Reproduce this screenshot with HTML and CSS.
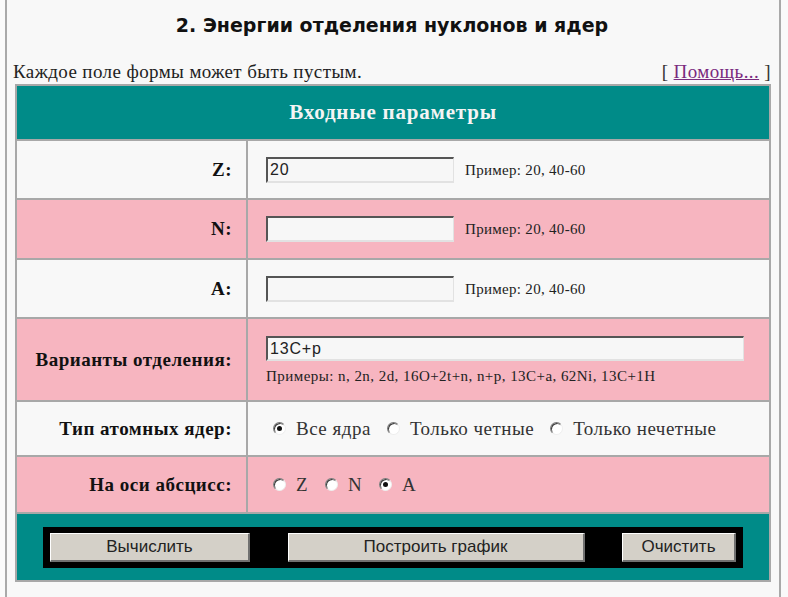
FILE: index.html
```html
<!DOCTYPE html>
<html lang="ru">
<head>
<meta charset="utf-8">
<title>Энергии отделения нуклонов и ядер</title>
<link rel="stylesheet" href="styles.css">
</head>
<body>
<div class="frame">
  <h1 class="title">2. Энергии отделения нуклонов и ядер</h1>
  <div class="note">
    <span>Каждое поле формы может быть пустым.</span>
    <span class="help">[ <a href="#" class="help-link">Помощь...</a> ]</span>
  </div>
  <table class="form-table">
    <tr class="row-head">
      <th colspan="2" class="head">Входные параметры</th>
    </tr>
    <tr class="row-light row-z">
      <td class="label">Z:</td>
      <td class="value"><input class="field" type="text" value="20"><span class="hint">Пример: 20, 40-60</span></td>
    </tr>
    <tr class="row-pink row-n">
      <td class="label">N:</td>
      <td class="value"><input class="field" type="text" value=""><span class="hint">Пример: 20, 40-60</span></td>
    </tr>
    <tr class="row-light row-a">
      <td class="label">A:</td>
      <td class="value"><input class="field" type="text" value=""><span class="hint">Пример: 20, 40-60</span></td>
    </tr>
    <tr class="row-pink row-var">
      <td class="label">Варианты отделения:</td>
      <td class="value">
        <input class="field field-wide" type="text" value="13C+p">
        <div class="hint hint-below">Примеры: n, 2n, 2d, 16O+2t+n, n+p, 13C+a, 62Ni, 13C+1H</div>
      </td>
    </tr>
    <tr class="row-light row-type">
      <td class="label">Тип атомных ядер:</td>
      <td class="value">
        <div class="radios">
          <label class="opt"><span class="radio checked"></span>Все ядра</label>
          <label class="opt"><span class="radio"></span>Только четные</label>
          <label class="opt"><span class="radio"></span>Только нечетные</label>
        </div>
      </td>
    </tr>
    <tr class="row-pink row-axis">
      <td class="label">На оси абсцисс:</td>
      <td class="value">
        <div class="radios radios-tight">
          <label class="opt"><span class="radio"></span>Z</label>
          <label class="opt"><span class="radio"></span>N</label>
          <label class="opt"><span class="radio checked"></span>A</label>
        </div>
      </td>
    </tr>
    <tr class="row-foot">
      <td colspan="2" class="foot">
        <div class="btnbar">
          <button class="btn btn-calc" type="button">Вычислить</button>
          <button class="btn btn-plot" type="button">Построить график</button>
          <button class="btn btn-clear" type="button">Очистить</button>
        </div>
      </td>
    </tr>
  </table>
</div>
</body>
</html>
```
FILE: styles.css
```css
html, body {
  margin: 0;
  padding: 0;
  background: #fafafa;
}
body {
  font-family: "Liberation Serif", "Times New Roman", serif;
  color: #111;
}
.frame {
  margin-left: 5px;
  width: 776px;
  min-height: 597px;
  box-sizing: border-box;
  border-left: 2px solid #a9a9a9;
  border-right: 2px solid #a9a9a9;
  background: #f8f8f8;
  padding: 0 8px 0 6px;
}
.title {
  margin: 0;
  padding-top: 12px;
  height: 59px;
  box-sizing: border-box;
  text-align: center;
  font-family: "DejaVu Sans", "Open Sans", sans-serif;
  font-weight: bold;
  font-size: 19px;
  line-height: 27px;
  color: #111;
}
.note {
  display: flex;
  justify-content: space-between;
  font-size: 19px;
  letter-spacing: 0.4px;
  line-height: 25px;
  height: 25px;
  color: #222;
}
.help { color: #333; }
.help-link { color: #7a2a7e; }
.form-table {
  margin-left: 2px;
  width: 756px;
  border-collapse: collapse;
  border: 2px solid #b4b4b4;
}
.form-table td, .form-table th {
  border: 2px solid #a8a8a8;
  padding: 0;
}
.head {
  background: #008b88;
  color: #f4f4f4;
  font-size: 21px;
  letter-spacing: 0.8px;
  font-weight: bold;
  height: 53px;
  text-align: center;
}
.row-light td { background: #f8f8f8; }
.row-pink td { background: #f7b5c0; }
.label {
  width: 215px;
  text-align: right;
  padding-right: 14px !important;
  font-weight: bold;
  font-size: 19px;
  letter-spacing: 0.5px;
}
.value {
  padding-left: 18px !important;
  font-size: 15px;
}
.row-z td { height: 57px; }
.row-n td { height: 58px; }
.row-a td { height: 57px; }
.row-var td { height: 81px; }
.row-type td { height: 53px; }
.row-axis td { height: 55px; }
.field {
  width: 188px;
  height: 26px;
  box-sizing: border-box;
  margin: 0 11px 0 0;
  padding: 0 2px;
  border-style: solid;
  border-width: 2px 1px 2px 2px;
  border-color: #555 #e2e2e2 #e2e2e2 #555;
  background: #f7f7f7;
  font-family: "Liberation Sans", Arial, sans-serif;
  font-size: 16px;
  letter-spacing: 0.8px;
  color: #222;
  vertical-align: baseline;
}
.field-wide {
  width: 478px;
  height: 25px;
  display: block;
  margin-top: 2px;
}
.hint {
  font-size: 15px;
  letter-spacing: 0.3px;
  color: #222;
}
.hint-below {
  margin-top: 7px;
  letter-spacing: 0.45px;
}
.radios {
  display: flex;
  align-items: center;
  gap: 16px;
  font-size: 19px;
  letter-spacing: 0.5px;
  color: #333;
  padding-left: 7px;
}
.radios-tight { gap: 17px; letter-spacing: 0.3px; }
.opt {
  display: flex;
  align-items: center;
  gap: 10px;
}
.radio {
  width: 13px;
  height: 13px;
  box-sizing: border-box;
  border-radius: 50%;
  border: 1px solid;
  border-color: #7a7a7a #eeeeee #eeeeee #7a7a7a;
  background: #fff;
  box-shadow: inset 1px 1px 0 #3c3c3c;
  position: relative;
}
.radio.checked::after {
  content: "";
  position: absolute;
  left: 3px;
  top: 3px;
  width: 5px;
  height: 5px;
  border-radius: 50%;
  background: #111;
}
.foot {
  background: #008b88;
  height: 66px;
  padding: 0 26px !important;
}
.btnbar {
  background: #000;
  height: 41px;
  box-sizing: border-box;
  padding: 6px 7px;
  display: flex;
  justify-content: space-between;
}
.btn {
  height: 29px;
  box-sizing: border-box;
  background: #d4d0c8;
  border-style: solid;
  border-width: 1px 2px 2px 1px;
  border-color: #fff #707070 #707070 #fff;
  font-family: "Liberation Sans", Arial, sans-serif;
  font-size: 17px;
  color: #222;
  padding: 0;
}
.btn-calc { width: 200px; }
.btn-plot { width: 297px; }
.btn-clear { width: 114px; }
```
